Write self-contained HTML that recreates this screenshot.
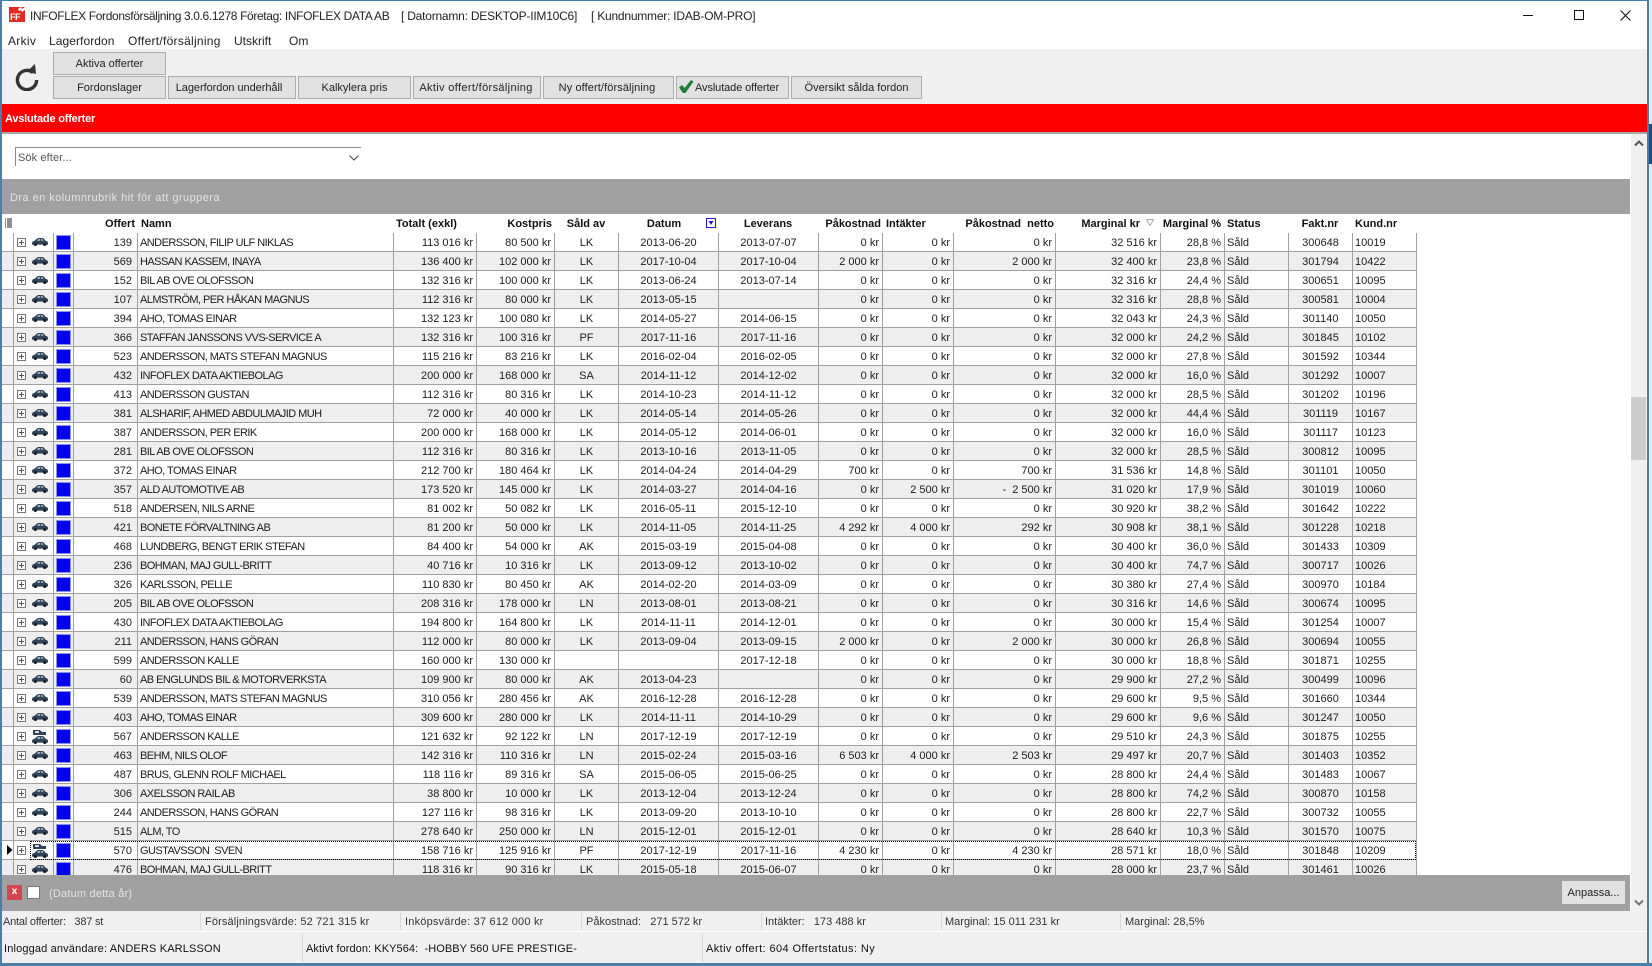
<!DOCTYPE html>
<html lang="sv"><head><meta charset="utf-8"><title>INFOFLEX Fordonsförsäljning</title>
<style>
html,body{margin:0;padding:0;background:#fff}
body{position:relative;width:1652px;height:966px;overflow:hidden;font:11px "Liberation Sans",sans-serif;color:#1c1c1c}
.a{position:absolute;white-space:pre}
.btn{position:absolute;box-sizing:border-box;height:23px;background:#e1e1e1;border:1px solid #adadad;text-align:center;line-height:23px;font-size:11px;color:#222}
table{position:absolute;left:2px;top:0;border-collapse:separate;border-spacing:0;table-layout:fixed;width:1415px}
td{box-sizing:border-box;height:19px;padding:2px 3px 0;border-right:1px solid #a0a0a0;border-bottom:1px solid #a0a0a0;white-space:pre;overflow:hidden;line-height:16px;font-size:11px;position:relative;text-align:right}
tr:nth-child(even) td{background:#eee}
td:nth-child(5){text-align:left;padding-left:2px;letter-spacing:-.55px}
td:nth-child(4){padding-right:5px}
td:nth-child(8),td:nth-child(9),td:nth-child(10),td:nth-child(17){text-align:center}
td:nth-child(16),td:nth-child(18){text-align:left;padding-left:2px}
td:nth-child(2):before{content:"";position:absolute;left:3px;top:5px;width:7px;height:7px;border:1px solid #777;background:linear-gradient(#555,#555) center/5px 1px no-repeat,linear-gradient(#555,#555) center/1px 5px no-repeat,#fff}
td:nth-child(2) svg{position:absolute;left:18px;top:5px;width:16px;height:8px}
td:nth-child(2) svg.d{top:1px;height:16px}
td:nth-child(3):after{content:"";position:absolute;left:2px;top:2px;width:13px;height:13px;background:#0000f0;border:1px solid #8f8ff0;box-sizing:content-box}
.h{position:absolute;top:215px;height:19px;line-height:19px;font-weight:bold;font-size:11px;white-space:pre;color:#111}
.s{position:absolute;top:912px;height:20px;line-height:20px;font-size:11px;color:#333;white-space:pre}
.d1{position:absolute;top:913px;height:17px;width:1px;background:#d8d8d8}
</style></head><body>
<svg width="0" height="0" style="position:absolute"><defs>
<g id="c"><path d="M0 5.200C0 3.600 1.200 3 2.600 2.700L4.600.9C5.300.3 6 0 7 0h3c1 0 1.700.4 2.400 1.200l1.200 1.500c1.300.3 2.400.9 2.400 2.200V6.600h-1.400a1.900 1.900 0 0 1-3.700 0H5.200a1.900 1.900 0 0 1-3.700 0H0z" fill="#2f4257"/><path d="M4.800 2.600 6.200 1.200h2v1.400zM9.200 1.200h1.400l1 1.400H9.200z" fill="#cfd8e2"/><circle cx="3.400" cy="6.400" r="1.300" fill="#111"/><circle cx="12.700" cy="6.400" r="1.300" fill="#111"/></g>
</defs></svg>

<!-- window frame -->
<div class="a" style="left:0;top:0;width:1652px;height:966px;background:#fff"></div>
<div class="a" style="left:0;top:0;width:1649px;height:1px;background:#3f7dac"></div>
<div class="a" style="left:0;top:0;width:2px;height:966px;background:#4a7fa8"></div>
<div class="a" style="left:1647px;top:0;width:2px;height:966px;background:#4a7fa8"></div>
<div class="a" style="left:1649px;top:0;width:3px;height:966px;background:#e4ebf0"></div>
<div class="a" style="left:1649px;top:124px;width:3px;height:40px;background:#1d4a78"></div>
<div class="a" style="left:0;top:963px;width:1652px;height:3px;background:#4a7fa8"></div>

<!-- title -->
<div class="a" style="left:9px;top:7px;width:16px;height:15px;background:#e02a22"></div>
<div class="a" style="left:10px;top:12px;font:bold 9px/10px 'Liberation Sans',sans-serif;color:#fff;letter-spacing:-.5px">FF</div>
<svg class="a" style="left:17px;top:6px" width="9" height="8"><path d="M1 3 4 1l1 2 3-2v3L5 6 4 4 2 5z" fill="#fff"/></svg>
<div class="a" style="left:30px;top:9px;font-size:12px;line-height:15px;color:#222;letter-spacing:-.36px">INFOFLEX Fordonsförsäljning 3.0.6.1278 Företag: INFOFLEX DATA AB</div>
<div class="a" style="left:401px;top:9px;font-size:12px;line-height:15px;color:#222;letter-spacing:-.22px">[ Datornamn: DESKTOP-IIM10C6]</div>
<div class="a" style="left:591px;top:9px;font-size:12px;line-height:15px;color:#222;letter-spacing:-.22px">[ Kundnummer: IDAB-OM-PRO]</div>
<div class="a" style="left:1523px;top:15px;width:10px;height:1px;background:#111"></div>
<div class="a" style="left:1574px;top:10px;width:8px;height:8px;border:1px solid #111"></div>
<svg class="a" style="left:1620px;top:10px" width="11" height="11"><path d="M.5.5l10 10M10.500.5l-10 10" stroke="#111" stroke-width="1.1"/></svg>

<!-- menu -->
<div class="a" style="left:8px;top:34px;font-size:12px;line-height:15px;color:#222;letter-spacing:.3px">Arkiv</div>
<div class="a" style="left:49px;top:34px;font-size:12px;line-height:15px;color:#222;letter-spacing:.07px">Lagerfordon</div>
<div class="a" style="left:128px;top:34px;font-size:12px;line-height:15px;color:#222;letter-spacing:.27px">Offert/försäljning</div>
<div class="a" style="left:234px;top:34px;font-size:12px;line-height:15px;color:#222">Utskrift</div>
<div class="a" style="left:289px;top:34px;font-size:12px;line-height:15px;color:#222">Om</div>

<!-- toolbar -->
<div class="a" style="left:2px;top:49px;width:1645px;height:55px;background:#f0f0f0"></div>
<svg class="a" style="left:14px;top:63px" width="26" height="28" viewBox="0 0 26 28"><path d="M19 9.500A9.600 9.600 0 1 0 22.600 17" fill="none" stroke="#333" stroke-width="3.400"/><path d="M13 8.500 21 1l1 10z" fill="#333"/></svg>
<div class="btn" style="left:53px;top:52px;width:113px">Aktiva offerter</div>
<div class="btn" style="left:53px;top:76px;width:113px">Fordonslager</div>
<div class="btn" style="left:168px;top:76px;width:128px;letter-spacing:-.05px;padding-right:6px">Lagerfordon underhåll</div>
<div class="btn" style="left:298px;top:76px;width:113px">Kalkylera pris</div>
<div class="btn" style="left:413px;top:76px;width:128px;letter-spacing:.35px;padding-right:2px">Aktiv offert/försäljning</div>
<div class="btn" style="left:543px;top:76px;width:131px;letter-spacing:.1px;padding-right:3px">Ny offert/försäljning</div>
<div class="btn" style="left:676px;top:76px;width:113px;text-align:left;padding-left:18px;letter-spacing:-.1px">Avslutade offerter</div>
<svg class="a" style="left:678px;top:79px" width="16" height="16"><path d="M1 8.500 4 6l2.500 3L13 1l2.500 1.500L7.500 14H5z" fill="#1a7f35"/></svg>
<div class="btn" style="left:791px;top:76px;width:131px">Översikt sålda fordon</div>

<!-- red -->
<div class="a" style="left:2px;top:104px;width:1645px;height:28px;background:#fe0000"></div>
<div class="a" style="left:2px;top:132px;width:1645px;height:2px;background:#a8a8a8"></div>
<div class="a" style="left:5px;top:112px;font:bold 11px/15px 'Liberation Sans',sans-serif;color:#fff;letter-spacing:-.2px">Avslutade offerter</div>

<!-- search -->
<div class="a" style="left:15px;top:147px;width:346px;height:1px;background:#8a8a8a"></div>
<div class="a" style="left:15px;top:147px;width:1px;height:19px;background:#8a8a8a"></div>
<div class="a" style="left:18px;top:151px;font-size:11px;line-height:15px;color:#555;letter-spacing:.1px">Sök efter...</div>
<svg class="a" style="left:349px;top:155px" width="10" height="6"><path d="M.5.5 5 5 9.500.5" fill="none" stroke="#444"/></svg>

<!-- group band -->
<div class="a" style="left:2px;top:179px;width:1628px;height:35px;background:#a0a0a0"></div>
<div class="a" style="left:10px;top:191px;font-size:11px;line-height:15px;color:#e4e4e4;letter-spacing:.45px">Dra en kolumnrubrik hit för att gruppera</div>

<!-- grid -->
<div class="a" style="left:0;top:233px;width:1630px;height:642px;overflow:hidden">
<table><colgroup><col style="width:12px"><col style="width:40px"><col style="width:20px"><col style="width:64px"><col style="width:256px"><col style="width:83px"><col style="width:78px"><col style="width:64px"><col style="width:100px"><col style="width:100px"><col style="width:64px"><col style="width:71px"><col style="width:102px"><col style="width:105px"><col style="width:64px"><col style="width:64px"><col style="width:64px"><col style="width:64px"></colgroup><tbody>
<tr><td></td><td><svg viewBox="0 0 16 8"><use href="#c"/></svg></td><td></td><td>139</td><td>ANDERSSON, FILIP ULF NIKLAS</td><td>113 016 kr</td><td>80 500 kr</td><td>LK</td><td>2013-06-20</td><td>2013-07-07</td><td>0 kr</td><td>0 kr</td><td>0 kr</td><td>32 516 kr</td><td>28,8 %</td><td>Såld</td><td>300648</td><td>10019</td></tr>
<tr><td></td><td><svg viewBox="0 0 16 8"><use href="#c"/></svg></td><td></td><td>569</td><td>HASSAN KASSEM, INAYA</td><td>136 400 kr</td><td>102 000 kr</td><td>LK</td><td>2017-10-04</td><td>2017-10-04</td><td>2 000 kr</td><td>0 kr</td><td>2 000 kr</td><td>32 400 kr</td><td>23,8 %</td><td>Såld</td><td>301794</td><td>10422</td></tr>
<tr><td></td><td><svg viewBox="0 0 16 8"><use href="#c"/></svg></td><td></td><td>152</td><td>BIL AB OVE OLOFSSON</td><td>132 316 kr</td><td>100 000 kr</td><td>LK</td><td>2013-06-24</td><td>2013-07-14</td><td>0 kr</td><td>0 kr</td><td>0 kr</td><td>32 316 kr</td><td>24,4 %</td><td>Såld</td><td>300651</td><td>10095</td></tr>
<tr><td></td><td><svg viewBox="0 0 16 8"><use href="#c"/></svg></td><td></td><td>107</td><td>ALMSTRÖM, PER HÅKAN MAGNUS</td><td>112 316 kr</td><td>80 000 kr</td><td>LK</td><td>2013-05-15</td><td></td><td>0 kr</td><td>0 kr</td><td>0 kr</td><td>32 316 kr</td><td>28,8 %</td><td>Såld</td><td>300581</td><td>10004</td></tr>
<tr><td></td><td><svg viewBox="0 0 16 8"><use href="#c"/></svg></td><td></td><td>394</td><td>AHO, TOMAS EINAR</td><td>132 123 kr</td><td>100 080 kr</td><td>LK</td><td>2014-05-27</td><td>2014-06-15</td><td>0 kr</td><td>0 kr</td><td>0 kr</td><td>32 043 kr</td><td>24,3 %</td><td>Såld</td><td>301140</td><td>10050</td></tr>
<tr><td></td><td><svg viewBox="0 0 16 8"><use href="#c"/></svg></td><td></td><td>366</td><td>STAFFAN JANSSONS VVS-SERVICE A</td><td>132 316 kr</td><td>100 316 kr</td><td>PF</td><td>2017-11-16</td><td>2017-11-16</td><td>0 kr</td><td>0 kr</td><td>0 kr</td><td>32 000 kr</td><td>24,2 %</td><td>Såld</td><td>301845</td><td>10102</td></tr>
<tr><td></td><td><svg viewBox="0 0 16 8"><use href="#c"/></svg></td><td></td><td>523</td><td>ANDERSSON, MATS STEFAN MAGNUS</td><td>115 216 kr</td><td>83 216 kr</td><td>LK</td><td>2016-02-04</td><td>2016-02-05</td><td>0 kr</td><td>0 kr</td><td>0 kr</td><td>32 000 kr</td><td>27,8 %</td><td>Såld</td><td>301592</td><td>10344</td></tr>
<tr><td></td><td><svg viewBox="0 0 16 8"><use href="#c"/></svg></td><td></td><td>432</td><td>INFOFLEX DATA AKTIEBOLAG</td><td>200 000 kr</td><td>168 000 kr</td><td>SA</td><td>2014-11-12</td><td>2014-12-02</td><td>0 kr</td><td>0 kr</td><td>0 kr</td><td>32 000 kr</td><td>16,0 %</td><td>Såld</td><td>301292</td><td>10007</td></tr>
<tr><td></td><td><svg viewBox="0 0 16 8"><use href="#c"/></svg></td><td></td><td>413</td><td>ANDERSSON GUSTAN</td><td>112 316 kr</td><td>80 316 kr</td><td>LK</td><td>2014-10-23</td><td>2014-11-12</td><td>0 kr</td><td>0 kr</td><td>0 kr</td><td>32 000 kr</td><td>28,5 %</td><td>Såld</td><td>301202</td><td>10196</td></tr>
<tr><td></td><td><svg viewBox="0 0 16 8"><use href="#c"/></svg></td><td></td><td>381</td><td>ALSHARIF, AHMED ABDULMAJID MUH</td><td>72 000 kr</td><td>40 000 kr</td><td>LK</td><td>2014-05-14</td><td>2014-05-26</td><td>0 kr</td><td>0 kr</td><td>0 kr</td><td>32 000 kr</td><td>44,4 %</td><td>Såld</td><td>301119</td><td>10167</td></tr>
<tr><td></td><td><svg viewBox="0 0 16 8"><use href="#c"/></svg></td><td></td><td>387</td><td>ANDERSSON, PER ERIK</td><td>200 000 kr</td><td>168 000 kr</td><td>LK</td><td>2014-05-12</td><td>2014-06-01</td><td>0 kr</td><td>0 kr</td><td>0 kr</td><td>32 000 kr</td><td>16,0 %</td><td>Såld</td><td>301117</td><td>10123</td></tr>
<tr><td></td><td><svg viewBox="0 0 16 8"><use href="#c"/></svg></td><td></td><td>281</td><td>BIL AB OVE OLOFSSON</td><td>112 316 kr</td><td>80 316 kr</td><td>LK</td><td>2013-10-16</td><td>2013-11-05</td><td>0 kr</td><td>0 kr</td><td>0 kr</td><td>32 000 kr</td><td>28,5 %</td><td>Såld</td><td>300812</td><td>10095</td></tr>
<tr><td></td><td><svg viewBox="0 0 16 8"><use href="#c"/></svg></td><td></td><td>372</td><td>AHO, TOMAS EINAR</td><td>212 700 kr</td><td>180 464 kr</td><td>LK</td><td>2014-04-24</td><td>2014-04-29</td><td>700 kr</td><td>0 kr</td><td>700 kr</td><td>31 536 kr</td><td>14,8 %</td><td>Såld</td><td>301101</td><td>10050</td></tr>
<tr><td></td><td><svg viewBox="0 0 16 8"><use href="#c"/></svg></td><td></td><td>357</td><td>ALD AUTOMOTIVE AB</td><td>173 520 kr</td><td>145 000 kr</td><td>LK</td><td>2014-03-27</td><td>2014-04-16</td><td>0 kr</td><td>2 500 kr</td><td>-  2 500 kr</td><td>31 020 kr</td><td>17,9 %</td><td>Såld</td><td>301019</td><td>10060</td></tr>
<tr><td></td><td><svg viewBox="0 0 16 8"><use href="#c"/></svg></td><td></td><td>518</td><td>ANDERSEN, NILS ARNE</td><td>81 002 kr</td><td>50 082 kr</td><td>LK</td><td>2016-05-11</td><td>2015-12-10</td><td>0 kr</td><td>0 kr</td><td>0 kr</td><td>30 920 kr</td><td>38,2 %</td><td>Såld</td><td>301642</td><td>10222</td></tr>
<tr><td></td><td><svg viewBox="0 0 16 8"><use href="#c"/></svg></td><td></td><td>421</td><td>BONETE FÖRVALTNING AB</td><td>81 200 kr</td><td>50 000 kr</td><td>LK</td><td>2014-11-05</td><td>2014-11-25</td><td>4 292 kr</td><td>4 000 kr</td><td>292 kr</td><td>30 908 kr</td><td>38,1 %</td><td>Såld</td><td>301228</td><td>10218</td></tr>
<tr><td></td><td><svg viewBox="0 0 16 8"><use href="#c"/></svg></td><td></td><td>468</td><td>LUNDBERG, BENGT ERIK STEFAN</td><td>84 400 kr</td><td>54 000 kr</td><td>AK</td><td>2015-03-19</td><td>2015-04-08</td><td>0 kr</td><td>0 kr</td><td>0 kr</td><td>30 400 kr</td><td>36,0 %</td><td>Såld</td><td>301433</td><td>10309</td></tr>
<tr><td></td><td><svg viewBox="0 0 16 8"><use href="#c"/></svg></td><td></td><td>236</td><td>BOHMAN, MAJ GULL-BRITT</td><td>40 716 kr</td><td>10 316 kr</td><td>LK</td><td>2013-09-12</td><td>2013-10-02</td><td>0 kr</td><td>0 kr</td><td>0 kr</td><td>30 400 kr</td><td>74,7 %</td><td>Såld</td><td>300717</td><td>10026</td></tr>
<tr><td></td><td><svg viewBox="0 0 16 8"><use href="#c"/></svg></td><td></td><td>326</td><td>KARLSSON, PELLE</td><td>110 830 kr</td><td>80 450 kr</td><td>AK</td><td>2014-02-20</td><td>2014-03-09</td><td>0 kr</td><td>0 kr</td><td>0 kr</td><td>30 380 kr</td><td>27,4 %</td><td>Såld</td><td>300970</td><td>10184</td></tr>
<tr><td></td><td><svg viewBox="0 0 16 8"><use href="#c"/></svg></td><td></td><td>205</td><td>BIL AB OVE OLOFSSON</td><td>208 316 kr</td><td>178 000 kr</td><td>LN</td><td>2013-08-01</td><td>2013-08-21</td><td>0 kr</td><td>0 kr</td><td>0 kr</td><td>30 316 kr</td><td>14,6 %</td><td>Såld</td><td>300674</td><td>10095</td></tr>
<tr><td></td><td><svg viewBox="0 0 16 8"><use href="#c"/></svg></td><td></td><td>430</td><td>INFOFLEX DATA AKTIEBOLAG</td><td>194 800 kr</td><td>164 800 kr</td><td>LK</td><td>2014-11-11</td><td>2014-12-01</td><td>0 kr</td><td>0 kr</td><td>0 kr</td><td>30 000 kr</td><td>15,4 %</td><td>Såld</td><td>301254</td><td>10007</td></tr>
<tr><td></td><td><svg viewBox="0 0 16 8"><use href="#c"/></svg></td><td></td><td>211</td><td>ANDERSSON, HANS GÖRAN</td><td>112 000 kr</td><td>80 000 kr</td><td>LK</td><td>2013-09-04</td><td>2013-09-15</td><td>2 000 kr</td><td>0 kr</td><td>2 000 kr</td><td>30 000 kr</td><td>26,8 %</td><td>Såld</td><td>300694</td><td>10055</td></tr>
<tr><td></td><td><svg viewBox="0 0 16 8"><use href="#c"/></svg></td><td></td><td>599</td><td>ANDERSSON KALLE</td><td>160 000 kr</td><td>130 000 kr</td><td></td><td></td><td>2017-12-18</td><td>0 kr</td><td>0 kr</td><td>0 kr</td><td>30 000 kr</td><td>18,8 %</td><td>Såld</td><td>301871</td><td>10255</td></tr>
<tr><td></td><td><svg viewBox="0 0 16 8"><use href="#c"/></svg></td><td></td><td>60</td><td>AB ENGLUNDS BIL &amp; MOTORVERKSTA</td><td>109 900 kr</td><td>80 000 kr</td><td>AK</td><td>2013-04-23</td><td></td><td>0 kr</td><td>0 kr</td><td>0 kr</td><td>29 900 kr</td><td>27,2 %</td><td>Såld</td><td>300499</td><td>10096</td></tr>
<tr><td></td><td><svg viewBox="0 0 16 8"><use href="#c"/></svg></td><td></td><td>539</td><td>ANDERSSON, MATS STEFAN MAGNUS</td><td>310 056 kr</td><td>280 456 kr</td><td>AK</td><td>2016-12-28</td><td>2016-12-28</td><td>0 kr</td><td>0 kr</td><td>0 kr</td><td>29 600 kr</td><td>9,5 %</td><td>Såld</td><td>301660</td><td>10344</td></tr>
<tr><td></td><td><svg viewBox="0 0 16 8"><use href="#c"/></svg></td><td></td><td>403</td><td>AHO, TOMAS EINAR</td><td>309 600 kr</td><td>280 000 kr</td><td>LK</td><td>2014-11-11</td><td>2014-10-29</td><td>0 kr</td><td>0 kr</td><td>0 kr</td><td>29 600 kr</td><td>9,6 %</td><td>Såld</td><td>301247</td><td>10050</td></tr>
<tr><td></td><td><svg class="d" viewBox="0 0 16 16"><use href="#c" y="8"/><path d="M1 2h7l2 2h4v3H1z" fill="#2f4257"/><path d="M3 3h4v2H3z" fill="#cfd8e2"/></svg></td><td></td><td>567</td><td>ANDERSSON KALLE</td><td>121 632 kr</td><td>92 122 kr</td><td>LN</td><td>2017-12-19</td><td>2017-12-19</td><td>0 kr</td><td>0 kr</td><td>0 kr</td><td>29 510 kr</td><td>24,3 %</td><td>Såld</td><td>301875</td><td>10255</td></tr>
<tr><td></td><td><svg viewBox="0 0 16 8"><use href="#c"/></svg></td><td></td><td>463</td><td>BEHM, NILS OLOF</td><td>142 316 kr</td><td>110 316 kr</td><td>LN</td><td>2015-02-24</td><td>2015-03-16</td><td>6 503 kr</td><td>4 000 kr</td><td>2 503 kr</td><td>29 497 kr</td><td>20,7 %</td><td>Såld</td><td>301403</td><td>10352</td></tr>
<tr><td></td><td><svg viewBox="0 0 16 8"><use href="#c"/></svg></td><td></td><td>487</td><td>BRUS, GLENN ROLF MICHAEL</td><td>118 116 kr</td><td>89 316 kr</td><td>SA</td><td>2015-06-05</td><td>2015-06-25</td><td>0 kr</td><td>0 kr</td><td>0 kr</td><td>28 800 kr</td><td>24,4 %</td><td>Såld</td><td>301483</td><td>10067</td></tr>
<tr><td></td><td><svg viewBox="0 0 16 8"><use href="#c"/></svg></td><td></td><td>306</td><td>AXELSSON RAIL AB</td><td>38 800 kr</td><td>10 000 kr</td><td>LK</td><td>2013-12-04</td><td>2013-12-24</td><td>0 kr</td><td>0 kr</td><td>0 kr</td><td>28 800 kr</td><td>74,2 %</td><td>Såld</td><td>300870</td><td>10158</td></tr>
<tr><td></td><td><svg viewBox="0 0 16 8"><use href="#c"/></svg></td><td></td><td>244</td><td>ANDERSSON, HANS GÖRAN</td><td>127 116 kr</td><td>98 316 kr</td><td>LK</td><td>2013-09-20</td><td>2013-10-10</td><td>0 kr</td><td>0 kr</td><td>0 kr</td><td>28 800 kr</td><td>22,7 %</td><td>Såld</td><td>300732</td><td>10055</td></tr>
<tr><td></td><td><svg viewBox="0 0 16 8"><use href="#c"/></svg></td><td></td><td>515</td><td>ALM, TO</td><td>278 640 kr</td><td>250 000 kr</td><td>LN</td><td>2015-12-01</td><td>2015-12-01</td><td>0 kr</td><td>0 kr</td><td>0 kr</td><td>28 640 kr</td><td>10,3 %</td><td>Såld</td><td>301570</td><td>10075</td></tr>
<tr><td></td><td><svg class="d" viewBox="0 0 16 16"><use href="#c" y="8"/><path d="M1 2h7l2 2h4v3H1z" fill="#2f4257"/><path d="M3 3h4v2H3z" fill="#cfd8e2"/></svg></td><td></td><td>570</td><td>GUSTAVSSON  SVEN</td><td>158 716 kr</td><td>125 916 kr</td><td>PF</td><td>2017-12-19</td><td>2017-11-16</td><td>4 230 kr</td><td>0 kr</td><td>4 230 kr</td><td>28 571 kr</td><td>18,0 %</td><td>Såld</td><td>301848</td><td>10209</td></tr>
<tr><td></td><td><svg viewBox="0 0 16 8"><use href="#c"/></svg></td><td></td><td>476</td><td>BOHMAN, MAJ GULL-BRITT</td><td>118 316 kr</td><td>90 316 kr</td><td>LK</td><td>2015-05-18</td><td>2015-06-07</td><td>0 kr</td><td>0 kr</td><td>0 kr</td><td>28 000 kr</td><td>23,7 %</td><td>Såld</td><td>301461</td><td>10026</td></tr>
</tbody></table>
<div class="a" style="left:30px;top:608px;width:1384px;height:17px;border:1px dotted #000"></div>
<svg class="a" style="left:7px;top:612px" width="6" height="10"><path d="M0 0l5.500 5L0 10z" fill="#000"/></svg>
</div>

<!-- header -->
<svg class="a" style="left:5px;top:218px" width="7" height="10"><path d="M0 1h1M0 3h1M0 5h1M0 7h1M0 9h1M2 1h5M2 3h5M2 5h5M2 7h5M2 9h5" stroke="#222"/></svg>
<div class="h" style="right:1517px">Offert</div>
<div class="h" style="left:141px">Namn</div>
<div class="h" style="left:396px">Totalt (exkl)</div>
<div class="h" style="right:1100px">Kostpris</div>
<div class="h" style="left:554px;width:64px;text-align:center">Såld av</div>
<div class="h" style="left:614px;width:100px;text-align:center">Datum</div>
<div class="h" style="left:718px;width:100px;text-align:center">Leverans</div>
<div class="h" style="right:771px">Påkostnad</div>
<div class="h" style="left:886px">Intäkter</div>
<div class="h" style="right:598px">Påkostnad  netto</div>
<div class="h" style="right:512px">Marginal kr</div>
<div class="h" style="right:431px">Marginal %</div>
<div class="h" style="left:1227px">Status</div>
<div class="h" style="left:1288px;width:64px;text-align:center">Fakt.nr</div>
<div class="h" style="left:1355px">Kund.nr</div>
<svg class="a" style="left:706px;top:218px" width="10" height="10"><rect x=".5" y=".5" width="9" height="9" fill="#fff" stroke="#1a1ad0"/><path d="M2.500 3h5L5 7z" fill="#1a1ad0"/></svg>
<svg class="a" style="left:1146px;top:219px" width="8" height="7"><path d="M.5.5h7L4 6.500z" fill="none" stroke="#aaa"/></svg>

<!-- filter band -->
<div class="a" style="left:2px;top:875px;width:1628px;height:36px;background:#a0a0a0"></div>
<div class="a" style="left:7px;top:885px;width:15px;height:15px;background:#d0484f;color:#fff;font:bold 10px/14px 'Liberation Sans',sans-serif;text-align:center">x</div>
<div class="a" style="left:27px;top:886px;width:11px;height:11px;background:#fff;border:1px solid #777"></div>
<div class="a" style="left:49px;top:887px;font-size:11px;line-height:15px;color:#e4e4e4;letter-spacing:.2px">(Datum detta år)</div>
<div class="a" style="left:1562px;top:881px;width:63px;height:23px;background:#e1e1e1;text-align:center;line-height:25px;font-size:11px;color:#222">Anpassa...</div>

<!-- scrollbar -->
<div class="a" style="left:1631px;top:134px;width:16px;height:777px;background:#f0f0f0"></div>
<div class="a" style="left:1631px;top:397px;width:15px;height:63px;background:#cdcdcd"></div>
<svg class="a" style="left:1634px;top:140px" width="10" height="7"><path d="M1 5.500 5 1.500 9 5.500" fill="none" stroke="#555" stroke-width="2"/></svg>
<svg class="a" style="left:1634px;top:899px" width="10" height="7"><path d="M1 1.500 5 5.500 9 1.500" fill="none" stroke="#777" stroke-width="2"/></svg>

<!-- status -->
<div class="a" style="left:2px;top:911px;width:1645px;height:52px;background:#f0f0f0"></div>
<div class="a" style="left:2px;top:931px;width:1645px;height:1px;background:#fff"></div>
<div class="s" style="left:3px;letter-spacing:-.2px">Antal offerter:   387 st</div>
<div class="d1" style="left:200px"></div><div class="s" style="left:205px;letter-spacing:.13px">Försäljningsvärde: 52 721 315 kr</div>
<div class="d1" style="left:400px"></div><div class="s" style="left:405px;letter-spacing:.2px">Inköpsvärde: 37 612 000 kr</div>
<div class="d1" style="left:581px"></div><div class="s" style="left:586px">Påkostnad:   271 572 kr</div>
<div class="d1" style="left:761px"></div><div class="s" style="left:765px">Intäkter:   173 488 kr</div>
<div class="d1" style="left:941px"></div><div class="s" style="left:945px">Marginal: 15 011 231 kr</div>
<div class="d1" style="left:1120px"></div><div class="s" style="left:1125px">Marginal: 28,5%</div>
<div class="s" style="left:4px;top:939px;color:#111;letter-spacing:.15px">Inloggad användare: ANDERS KARLSSON</div>
<div class="a" style="left:302px;top:933px;width:1px;height:29px;background:#d8d8d8"></div>
<div class="s" style="left:306px;top:939px;color:#111;letter-spacing:.07px">Aktivt fordon: KKY564:  -HOBBY 560 UFE PRESTIGE-</div>
<div class="a" style="left:702px;top:933px;width:1px;height:29px;background:#d8d8d8"></div>
<div class="s" style="left:706px;top:939px;color:#111;letter-spacing:.4px">Aktiv offert: 604 Offertstatus: Ny</div>
</body></html>
